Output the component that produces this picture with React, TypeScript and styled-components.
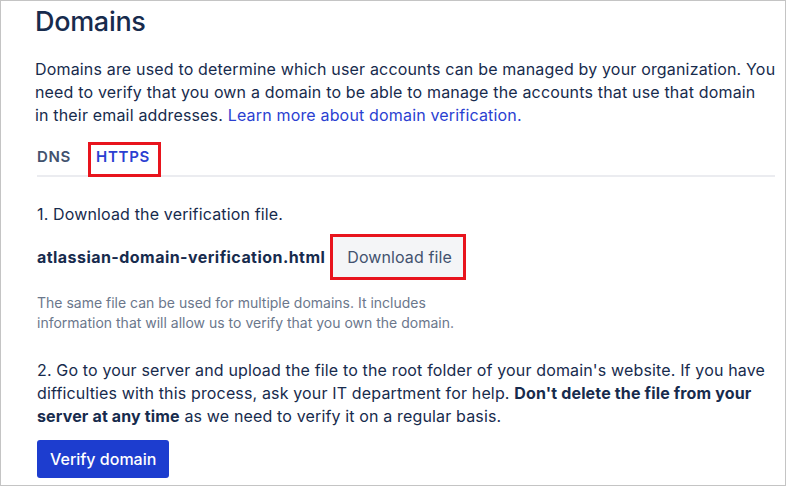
import React from 'react';
import styled, {createGlobalStyle} from 'styled-components';

const GlobalStyle = createGlobalStyle`
    html, body {
        margin: 0;
        padding: 0;
        background: #ffffff;
    }
    body {
        font-family: Inter, "Noto Sans", "Liberation Sans", sans-serif;
        color: #172b4d;
    }
`;

const Frame = styled.div`
    width: 786px;
    height: 486px;
    box-sizing: border-box;
    border: 1px solid #c4c4c4;
    padding: 0 10px 0 34px;
    overflow: hidden;
`;

const Title = styled.h1`
    margin: 0;
    padding-top: 4px;
    font-size: 27px;
    line-height: 33px;
    font-weight: 500;
    color: #172b4d;
    letter-spacing: -0.3px;
`;

const Intro = styled.p`
    margin: 20px 0 0;
    font-size: 16px;
    line-height: 23px;
    color: #172b4d;
    letter-spacing: 0.17px;
    white-space: nowrap;
`;

const Link = styled.a`
    color: #2b3fd1;
    text-decoration: none;
`;

const TabsArea = styled.div`
    margin-left: 2px;
    width: 738px;
`;

const TabList = styled.div`
    display: flex;
    align-items: flex-start;
    height: 33px;
    margin-top: 15px;
    border-bottom: 2px solid #ebecf0;
`;

const Tab = styled.div<{ $marked?: boolean; $active?: boolean }>`
    box-sizing: border-box;
    height: 35px;
    font-size: 15px;
    line-height: 20px;
    font-weight: 600;
    color: ${({$active}) => ($active ? '#2b3fd1' : '#42526e')};
    border: ${({$marked}) => ($marked ? '3px solid #e8141d' : 'none')};
    padding: ${({$marked}) => ($marked ? '2px 8px 0 5px' : '5px 0 0')};
    margin-left: ${({$marked}) => ($marked ? '17px' : '0')};
    letter-spacing: 0.7px;
`;

const Step = styled.p`
    margin: 26px 0 0;
    font-size: 16px;
    line-height: 23px;
    color: #172b4d;
    letter-spacing: 0.15px;
`;

const FileRow = styled.div`
    display: flex;
    align-items: center;
    gap: 5px;
    margin-top: 8px;
`;

const FileName = styled.span`
    font-size: 16px;
    line-height: 23px;
    font-weight: 700;
    color: #172b4d;
    letter-spacing: 0.45px;
`;

const SecondaryButton = styled.button`
    box-sizing: border-box;
    height: 46px;
    padding: 0 11px 0 14px;
    border: 3px solid #e8141d;
    background: #f4f5f7;
    color: #42526e;
    font-family: inherit;
    font-size: 16px;
    font-weight: 400;
    letter-spacing: 0.1px;
    cursor: pointer;
`;

const Hint = styled.p`
    margin: 13px 0 0;
    font-size: 14px;
    line-height: 20px;
    color: #6b778c;
    width: 460px;
`;

const Instructions = styled.p`
    margin: 26px 0 0;
    font-size: 16px;
    line-height: 23px;
    color: #172b4d;
    letter-spacing: 0.15px;
    width: 735px;
`;

const PrimaryButton = styled.button`
    margin-top: 12px;
    height: 38px;
    padding: 0 13px;
    border: none;
    border-radius: 3px;
    background: #1d3dcf;
    color: #ffffff;
    font-family: inherit;
    font-size: 16px;
    font-weight: 500;
    cursor: pointer;
`;

function App() {
    return (
        <Frame>
            <GlobalStyle />
            <Title>Domains</Title>
            <Intro>
                Domains are used to determine which user accounts can be managed by your organization. You
                <br />
                need to verify that you own a domain to be able to manage the accounts that use that domain
                <br />
                in their email addresses. <Link href="#">Learn more about domain verification.</Link>
            </Intro>
            <TabsArea>
                <TabList>
                    <Tab>DNS</Tab>
                    <Tab $marked $active>HTTPS</Tab>
                </TabList>
                <Step>1. Download the verification file.</Step>
                <FileRow>
                    <FileName>atlassian-domain-verification.html</FileName>
                    <SecondaryButton>Download file</SecondaryButton>
                </FileRow>
                <Hint>
                    The same file can be used for multiple domains. It includes information that will
                    allow us to verify that you own the domain.
                </Hint>
                <Instructions>
                    2. Go to your server and upload the file to the root folder of your domain's website. If you
                    have difficulties with this process, ask your IT department for help.{' '}
                    <strong>Don't delete the file from your server at any time</strong> as we need to verify it
                    on a regular basis.
                </Instructions>
                <PrimaryButton>Verify domain</PrimaryButton>
            </TabsArea>
        </Frame>
    );
}

export default App;
